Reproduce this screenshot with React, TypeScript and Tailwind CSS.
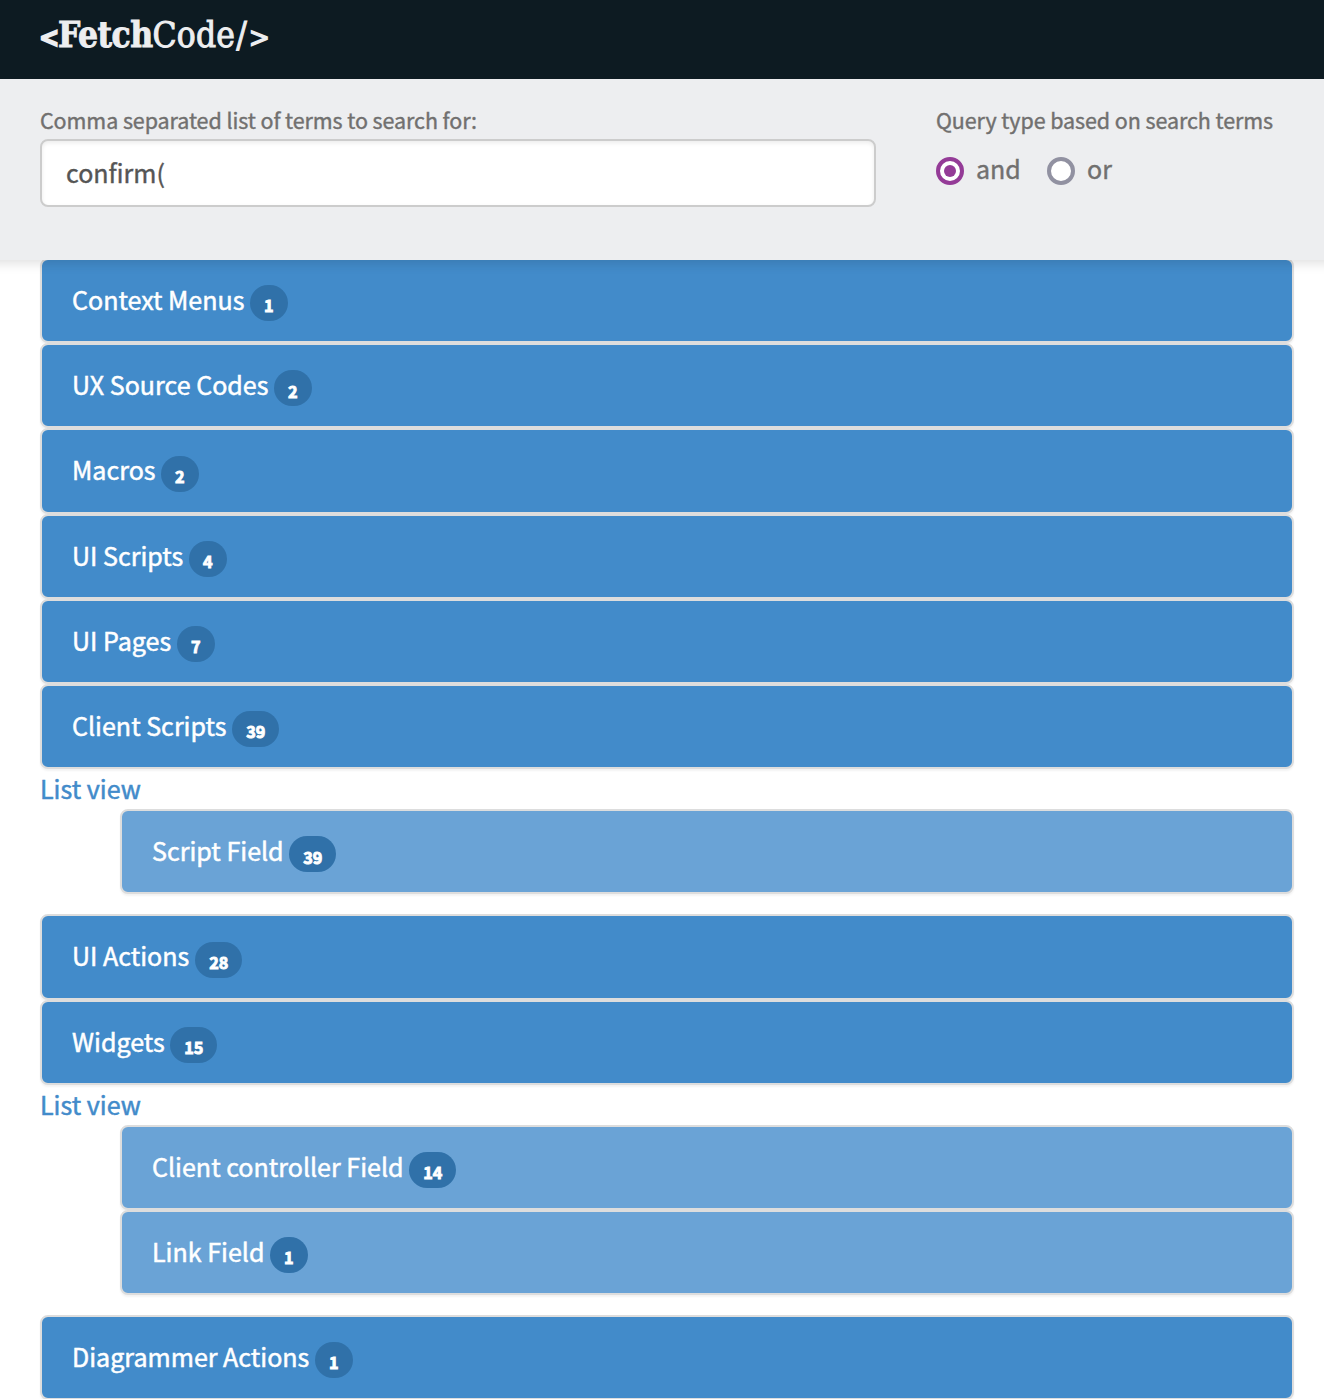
import React from "react";

type Item = { label: string; count: number; width: string };

const contextItems: Item[] = [
  { label: "Context Menus", count: 1, width: "w-[173px]" },
  { label: "UX Source Codes", count: 2, width: "w-[197px]" },
  { label: "Macros", count: 2, width: "w-[84px]" },
  { label: "UI Scripts", count: 4, width: "w-[112px]" },
  { label: "UI Pages", count: 7, width: "w-[100px]" },
  { label: "Client Scripts", count: 39, width: "w-[155px]" },
];

const actionItems: Item[] = [
  { label: "UI Actions", count: 28, width: "w-[118px]" },
  { label: "Widgets", count: 15, width: "w-[93px]" },
];

function Row({ item, light = false }: { item: Item; light?: boolean }) {
  return (
    <div
      className={`flex h-[85.2px] items-start rounded-[8px] border-2 border-[#dddddd] pl-[30px] shadow-[0_2px_2px_rgba(0,0,0,0.05)] ${
        light ? "bg-[#6aa3d6]" : "bg-[#428bca]"
      }`}
    >
      <span className={`mt-[19px] whitespace-nowrap text-[25.05px] leading-[40px] text-white [-webkit-text-stroke:0.5px_white] ${item.width}`}>
        {item.label}
      </span>
      <span
        className={`mt-[25.2px] ml-[5.2px] flex h-9 justify-center rounded-[20px] bg-[#3071a9] pt-[2.2px] text-[16.2px] leading-[36px] font-bold text-white [-webkit-text-stroke:0.9px_white] ${
          item.count > 9 ? "w-[47px]" : "w-[37.4px]"
        }`}
      >
        {item.count}
      </span>
    </div>
  );
}

function ListView() {
  return (
    <div className="h-10 text-[25.05px] leading-[38px] text-[#428bca] [-webkit-text-stroke:0.5px_#428bca]">
      <a href="#list">List view</a>
    </div>
  );
}

export default function App() {
  return (
    <div className="h-[1399px] overflow-hidden bg-white font-['Noto_Sans_CJK_SC',sans-serif]">
      <header className="relative z-20 flex h-[79px] bg-[#0d1b22] pl-10">
        <div className="mt-[10px] flex origin-left scale-x-[0.9] items-baseline whitespace-nowrap font-['DejaVu_Serif',serif] text-[35px] leading-[50px] text-[#edeef0]">
          <span className="-ml-[1px] w-[21px] text-[27px] font-bold [-webkit-text-stroke:1.8px_#edeef0]">&lt;</span>
          <span className="w-[105px] font-bold tracking-[-0.6px] [-webkit-text-stroke:0.9px_#edeef0]">Fetch</span>
          <span className="w-[93px] tracking-[0.2px] [-webkit-text-stroke:1px_#edeef0]">Code</span>
          <span className="w-[14px] [-webkit-text-stroke:1px_#edeef0]">/</span>
          <span className="text-[28px] [-webkit-text-stroke:1.4px_#edeef0]">&gt;</span>
        </div>
      </header>

      <section className="relative z-10 -mx-5 flex h-[181px] bg-[#edeef0] px-[60px] pt-[26px] text-[#71706f] shadow-[0_2px_12px_rgba(0,0,0,0.15)]">
        <div className="w-[836px] shrink-0">
          <label htmlFor="terms" className="block h-[34px] whitespace-nowrap text-[21.48px] leading-[30px] tracking-[-0.08px] [-webkit-text-stroke:0.4px_#71706f]">
            Comma separated list of terms to search for:
          </label>
          <input
            id="terms"
            defaultValue="confirm("
            className="block h-[68px] w-full rounded-[8px] border-2 border-[#cccccc] bg-white px-6 pb-[3px] text-[25px] text-[#555555] shadow-[inset_0_2px_4px_rgba(0,0,0,0.08)] outline-none [-webkit-text-stroke:0.4px_#555555]"
          />
        </div>
        <div className="ml-[60px] [-webkit-text-stroke:0.4px_#71706f]">
          <div className="whitespace-nowrap text-[21.48px] leading-[30px] tracking-[-0.08px]">Query type based on search terms</div>
          <div className="mt-4 flex h-10 items-center text-[25px] leading-[40px]">
            <span className="flex size-7 items-center justify-center rounded-full border-4 border-[#943b97] bg-white">
              <span className="size-3 rounded-full bg-[#943b97]" />
            </span>
            <span className="-mt-[6px] ml-3 w-[71px]">and</span>
            <span className="size-7 rounded-full border-4 border-[#9191a1] bg-white" />
            <span className="-mt-[6px] ml-3">or</span>
          </div>
        </div>
      </section>

      <main className="-mt-[2px] pr-[30px] pl-10">
        {contextItems.map((item) => (
          <Row key={item.label} item={item} />
        ))}
        <ListView />
        <div className="mb-5 ml-20">
          <Row item={{ label: "Script Field", count: 39, width: "w-[132px]" }} light />
        </div>
        {actionItems.map((item) => (
          <Row key={item.label} item={item} />
        ))}
        <ListView />
        <div className="mb-5 ml-20">
          <Row item={{ label: "Client controller Field", count: 14, width: "w-[252px]" }} light />
          <Row item={{ label: "Link Field", count: 1, width: "w-[113px]" }} light />
        </div>
        <Row item={{ label: "Diagrammer Actions", count: 1, width: "w-[238px]" }} />
      </main>
    </div>
  );
}
